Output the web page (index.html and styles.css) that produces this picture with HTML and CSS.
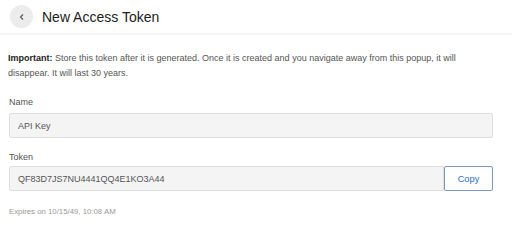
FILE: index.html
```html
<!DOCTYPE html>
<html>
<head>
<meta charset="utf-8">
<link rel="stylesheet" href="styles.css">
</head>
<body>
<div class="header">
  <div class="back">
    <svg width="8" height="8" viewBox="0 0 8 8"><path d="M5 1.5 L2.5 4 L5 6.5" fill="none" stroke="#555" stroke-width="1.1"/></svg>
  </div>
  <div class="title">New Access Token</div>
</div>
<div class="content">
  <p class="note"><b class="strong">Important:</b><span class="rest"> Store this token after it is generated. Once it is created and you navigate away from this popup, it will disappear. It will last 30 years.</span></p>
  <div class="label">Name</div>
  <div class="field">API Key</div>
  <div class="label token-label">Token</div>
  <div class="row">
    <div class="field grow">QF83D7JS7NU4441QQ4E1KO3A44</div>
    <div class="copy">Copy</div>
  </div>
  <div class="expires">Expires on 10/15/49, 10:08 AM</div>
</div>
</body>
</html>
```
FILE: styles.css
```css
html, body { margin: 0; padding: 0; background: #fff; }
body { font-family: "Liberation Sans", Arial, sans-serif; color: #333; width: 512px; height: 226px; overflow: hidden; }
.header {
  height: 33px;
  display: flex;
  align-items: center;
  padding-left: 10px;
  border-bottom: 2px solid #f4f4f4;
}
.back {
  width: 23px; height: 23px; border-radius: 50%;
  background: #ececec;
  display: flex; align-items: center; justify-content: center;
}
.title { margin-left: 9px; font-size: 14px; color: #222; }
.content { padding: 16px 19px 0 8px; }
.note { margin: 0; font-size: 9px; line-height: 15px; color: #555; width: 462px; }
.note .strong { color: #222; font-weight: bold; }
.label { font-size: 9px; color: #555; margin-top: 15px; margin-left: 1px; line-height: 12px; }
.token-label { margin-top: 13px; }
.field {
  margin-top: 5px; margin-left: 1px;
  height: 23px; border: 1px solid #dedede; border-radius: 2px;
  background: #f4f4f4;
  display: flex; align-items: center; padding-left: 8px;
  font-size: 9px; color: #555;
}
.row { display: flex; margin-top: 3px; margin-left: 1px; }
.row .field { margin: 0; flex: 1; border-radius: 2px 0 0 2px; }
.copy {
  width: 47px; height: 23px; border: 1px solid #7b99c4; border-radius: 2px;
  display: flex; align-items: center; justify-content: center;
  font-size: 9.3px; color: #2f6fb8; background: #fff;
}
.expires { margin-top: 16px; margin-left: 1px; font-size: 7.8px; color: #999; }
```
